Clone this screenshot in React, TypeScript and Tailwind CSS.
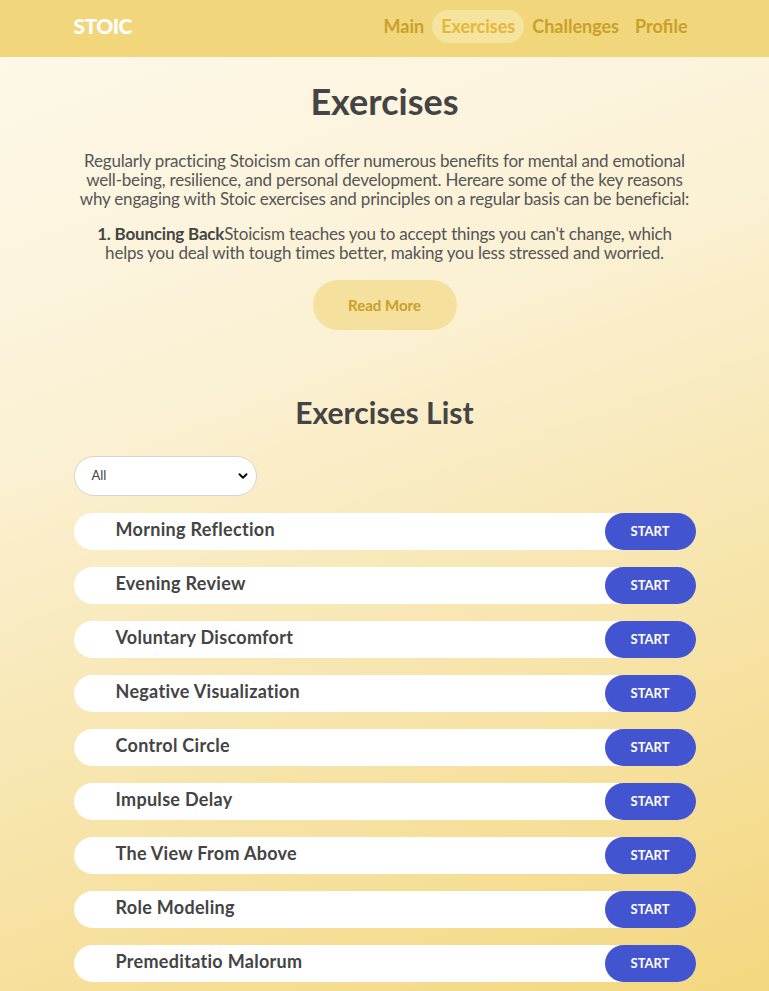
import React from 'react'

function App() {
  const exercises = [
    'Morning Reflection',
    'Evening Review',
    'Voluntary Discomfort',
    'Negative Visualization',
    'Control Circle',
    'Impulse Delay',
    'The View From Above',
    'Role Modeling',
    'Premeditatio Malorum',
  ]

  const nav = ['Main', 'Exercises', 'Challenges', 'Profile']

  return (
    <div className="min-h-screen bg-[linear-gradient(160deg,#fdf9ec_0%,#fbf1d4_35%,#f3d67c_100%)] font-['Lato','Noto_Sans',sans-serif] text-[#444]">
      <header className="bg-[#f2d67b] h-[57px]">
        <div className="max-w-[622px] mx-auto h-full flex items-center justify-between pb-[5px]">
          <span className="text-white font-black text-[21px] tracking-tight">STOIC</span>
          <nav className="flex items-center">
            {nav.map((item) => (
              <a
                key={item}
                className={
                  item === 'Exercises'
                    ? 'px-[9px] h-[33px] flex items-center rounded-full bg-[#f5e3a0] text-[#e6b737] font-bold text-[18px]'
                    : 'px-[8px] h-[33px] flex items-center text-[#c8a12a] font-bold text-[18px]'
                }
              >
                {item}
              </a>
            ))}
          </nav>
        </div>
      </header>

      <main className="max-w-[622px] mx-auto">
        <h1 className="text-center text-[36px] font-bold mt-[22px] leading-[44px]">Exercises</h1>
        <p className="text-center text-[17px] leading-[19px] text-[#555] mt-[28px] tracking-[-0.2px]">
          Regularly practicing Stoicism can offer numerous benefits for mental and emotional well-being, resilience, and personal development. Hereare some of the key reasons why engaging with Stoic exercises and principles on a regular basis can be beneficial:
        </p>
        <p className="text-center text-[17px] leading-[19px] text-[#555] mt-[16px] px-[18px] tracking-[-0.2px]">
          <b className="text-[#444]">1. Bouncing Back</b>Stoicism teaches you to accept things you can't change, which helps you deal with tough times better, making you less stressed and worried.
        </p>
        <div className="flex justify-center mt-[18px]">
          <button className="w-[144px] h-[50px] rounded-full bg-[#f5e09d] text-[#c8a12a] font-bold text-[15px]">
            Read More
          </button>
        </div>

        <h2 className="text-center text-[30px] font-bold mt-[64px] leading-[36px]">Exercises List</h2>

        <div className="mt-[26px] w-[183px] h-[40px] rounded-full bg-white border border-[#d4d4d4] flex items-center justify-between pl-[17px] pr-[6px]">
          <span className="text-[13px] text-[#444]">All</span>
          <svg width="14" height="14" viewBox="0 0 24 24" fill="none" stroke="#111" strokeWidth="3.5" strokeLinecap="round" strokeLinejoin="round">
            <path d="M6 9l6 6 6-6" />
          </svg>
        </div>

        <ul className="mt-[17px] flex flex-col gap-[17px] pb-10">
          {exercises.map((name) => (
            <li key={name} className="h-[37px] bg-white rounded-full flex items-center justify-between">
              <span className="pl-[42px] pb-[4px] font-bold text-[18px] tracking-[0.3px] text-[#444]">{name}</span>
              <button className="w-[91px] h-[37px] rounded-full bg-[#4354d0] text-white font-bold text-[13px]">
                START
              </button>
            </li>
          ))}
        </ul>
      </main>
    </div>
  )
}

export default App
